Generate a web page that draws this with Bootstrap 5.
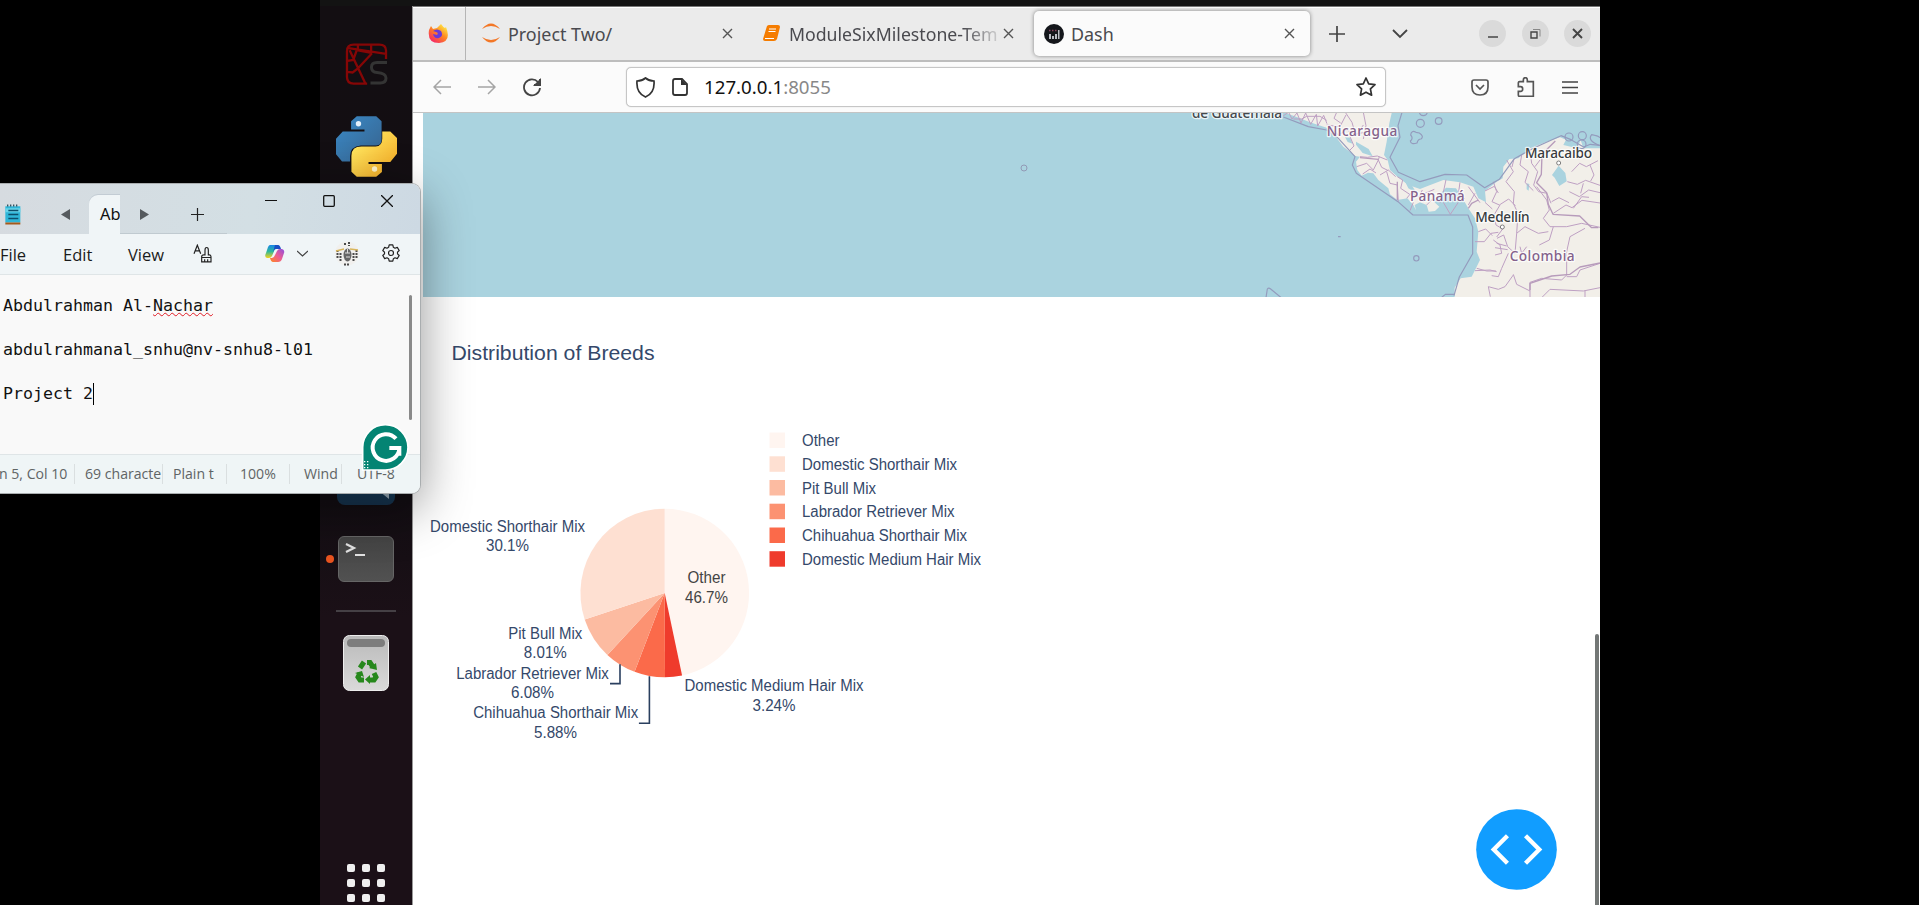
<!DOCTYPE html>
<html lang="en">
<head>
<meta charset="utf-8">
<title>Dash</title>
<link href="https://cdn.jsdelivr.net/npm/bootstrap@5.3.0/dist/css/bootstrap.min.css" rel="stylesheet">
<script src="https://cdn.jsdelivr.net/npm/bootstrap@5.3.0/dist/js/bootstrap.bundle.min.js"></script>
<style>
html,body{height:100%;margin:0;background:#000;overflow:hidden}
body{font-family:"Noto Sans","Open Sans",sans-serif}
svg{display:block;flex:none}
.screen{width:1919px;height:905px;padding-left:320px}
.vm{width:1280px;height:905px}
.topbar{height:6px;background:#131313}
.dock{width:92px;background:linear-gradient(#130e12,#130e13 55%,#1b1017 68%);position:relative;overflow:hidden}
.spy{margin-top:37px}.py{margin-top:30px}
.code-app{margin-top:270px;width:58px;height:58px;border-radius:8px;background:linear-gradient(#17628f,#17344f);overflow:hidden;flex:none}
.term-row{margin-top:31px;width:100%;position:relative}
.run-dot{position:absolute;left:6px;top:19px;width:8px;height:8px;border-radius:50%;background:#e95420}
.term{width:56px;height:46px;border-radius:6px;background:linear-gradient(#444,#515151);border:1px solid #666;color:#eee}
.dock-line{margin-top:28px;width:60px;height:2px;background:#454045;flex:none}
.trash{margin-top:23px}.apps{margin-top:172px}
.browser{background:#fff;border-left:1px solid #999;width:1188px}
.tabstrip{height:54px;background:#ebebeb;border-top:1px solid #777;font-size:17.9px;color:#4a4a4f;box-shadow:inset 0 1px #fff}
.tabstrip .tab-label{padding-top:2px}
.pin{width:53px;height:53px;border-right:1px solid #b5b5b5;padding-right:3px}
.tab-a{width:284px;padding-left:15px;padding-right:17px}
.tab-b{width:284px;padding-left:13px;padding-right:18px}
.fade-title{width:212px;white-space:nowrap;margin-left:9px;font-size:17.7px;-webkit-mask-image:linear-gradient(90deg,#000 82%,rgba(0,0,0,.1));mask-image:linear-gradient(90deg,#000 82%,rgba(0,0,0,.1))}
.tab-on{width:276px;height:45px;background:#fbfbfb;border-radius:5px;box-shadow:0 0 4px rgba(0,0,0,.45);padding-left:10px;padding-right:15px}
.wbtn{width:27px;height:27px;border-radius:50%;background:#dadada}
.toolbar{height:53px;background:#fbfbfb;border-top:2px solid #bdbdbd;border-bottom:1px solid #c4c4c4;padding-left:20px;padding-right:22px}
.urlbar{width:760px;height:40px;border:1px solid #c6c6c6;border-radius:5px;background:#fff;box-shadow:0 0 1px #bbb;font-size:18.7px;color:#111;margin-left:85px;padding:0 9px 0 9px}
.urlbar .port{color:#888}
.page{position:relative}
.map{margin-left:10px}
.scroll-v{position:absolute;right:1px;top:521px;width:4px;height:300px;background:#737776;border-radius:2px}
.debug{position:absolute;left:1063px;top:696px}
.note{position:absolute;left:0;top:183px;width:421px;height:311px;background:#f9f9f9;border:1px solid #a9adaf;border-left:0;border-radius:0 9px 9px 0;box-shadow:0 14px 50px rgba(0,0,0,.42);overflow:hidden}
.ntitle{height:50px;background:linear-gradient(100deg,#d6dbe0,#d3dfe4 60%,#cdd9e3)}
.tabline{border-bottom:1px solid #c0cad0;height:50px}
.nt1{width:25px}.nt2{width:47px;margin-left:17px}.nt4{width:48px}.nt5{width:59px}
.ntab{width:31px;height:39px;background:#f0f5f7;border-radius:9px 0 0 0;overflow:hidden;padding-left:11px;font-size:16.4px;line-height:37px;color:#111;margin-top:11px;box-shadow:0 -1px #c3ccd4}
.wb{width:58px;height:33px}
.nmenu{height:41px;background:#f0f5f7;border-bottom:1px solid #dfe5e7;display:grid;grid-template-columns:63px 65px 65px 72px 32px 38px 47px 1fr;align-items:center;font-family:"Open Sans",sans-serif;font-size:16.5px;color:#1b1b1b;padding-bottom:1px}
.nmenu span{padding-top:3px}
.nmenu svg{margin-top:-1px}
.nedit{height:179px;position:relative;padding:20px 0 0 3px;font:16.61px/22px "DejaVu Sans Mono",monospace;color:#111;white-space:pre}
.nscroll{position:absolute;right:8px;top:20px;width:3px;height:125px;border-radius:2px;background:#8a8a8a}
.squig{text-decoration:underline wavy #e01b24 1px;text-underline-offset:1px;text-decoration-skip-ink:none}
.caret{display:inline-block;width:1px;height:22px;background:#000;vertical-align:-6px}
.nstatus{height:40px;background:#eff5f6;border-top:1px solid #dfe5e7;display:grid;grid-template-columns:75px 88px 64px 63px 52px 78px;align-items:center;font-family:"Open Sans",sans-serif;font-size:14.1px;color:#606465;padding-bottom:1px}
.nstatus div{height:20px;line-height:20px;border-right:1px solid #dadfe0;overflow:hidden;white-space:nowrap;padding-left:10px}
.nstatus div:first-child{padding-left:0;text-indent:-1px}
.nstatus div:last-child{border:0}
.gram{position:absolute;left:361px;top:239px}
</style>
</head>
<body>
<div class="screen position-relative">
<div class="vm d-flex flex-column">
 <div class="topbar flex-shrink-0"></div>
 <div class="d-flex flex-grow-1 overflow-hidden">
  <nav class="dock d-flex flex-column align-items-center">
   <svg class="spy" width="43" height="43" viewBox="104 128 130 130" fill="none" stroke="#860606" stroke-width="7"><path d="M228 176v-25q0-18-20-18h-78q-20 0-20 20v78q0 20 20 20h41M110 143l118 18M118 150l48 101M143 133v17l40 8v-24M185 160l-42 45-16 12-16-2M112 182l17-3 10-28"/><path stroke="#343434" stroke-width="9" d="M231 187h-30q-17 0-17 14 0 15 17 16 27 2 27 17 0 15-17 15h-30"/></svg>
   <svg class="py" width="61" height="61" viewBox="78 349 182 182"><defs><linearGradient id="pb" x1="0" y1="0" x2="1" y2="1"><stop stop-color="#3a8ac8"/><stop offset="1" stop-color="#37628c"/></linearGradient><linearGradient id="pyl" x1="0" y1="0" x2="1" y2="1"><stop offset=".2" stop-color="#ffe55e"/><stop offset="1" stop-color="#f2a31e"/></linearGradient></defs><path fill="url(#pb)" d="M140 350h58l16 15v55q0 17-16 17h-46q-31 2-32 32v16h-24l-18-22v-46l20-22h65v-6h-40v-24z"/><path fill="url(#pyl)" d="M198 530h-58l-16-15v-47q0-28 30-28h42q20-1 20-24v-21h24l20 20v47l-20 24h-65v6h40v24z"/><circle cx="145" cy="372" r="8" fill="#e6f0fa"/><circle cx="193" cy="507" r="8" fill="#fff3c8"/></svg>
   <div class="code-app"><svg width="58" height="58"><path d="M42 44l10 8v-7z" fill="#9fb4c2"/></svg></div>
   <div class="term-row d-flex justify-content-center flex-shrink-0"><span class="run-dot"></span><div class="term"><svg width="54" height="44" viewBox="0 0 54 44" fill="none" stroke="#e2e2e2" stroke-width="2.2"><path d="M7 7l8 4-8 4M16 18h10"/></svg></div></div>
   <div class="dock-line"></div>
   <svg class="trash" width="46" height="57" viewBox="0 0 46 57"><defs><linearGradient id="tg" x1="0" x2="0" y1="0" y2="1"><stop stop-color="#b9b9b9"/><stop offset="1" stop-color="#dadada"/></linearGradient></defs><rect x=".5" y=".5" width="45" height="55" rx="6" fill="url(#tg)" stroke="#eee"/><rect x="4" y="4" width="38" height="8" rx="4" fill="#7d7d7d"/><g fill="none" stroke="#26881c" stroke-width="5"><path d="M17 33l4-6M24 27.500h3l3 4.500"/><path d="M31 38l2 4-2 3h-5"/><path d="M21 45h-4l-2-3 2-4"/></g><path fill="#26881c" d="M26 33l7-5 1 7zM27 40v9l-5-4.500zM12 38l7-2 2 6z"/></svg>
   <svg class="apps" width="38" height="40" fill="#efefef"><rect width="8" height="8" rx="2"/><rect x="15" width="8" height="8" rx="2"/><rect x="30" width="8" height="8" rx="2"/><rect y="15" width="8" height="8" rx="2"/><rect x="15" y="15" width="8" height="8" rx="2"/><rect x="30" y="15" width="8" height="8" rx="2"/><rect y="30" width="8" height="8" rx="2"/><rect x="15" y="30" width="8" height="8" rx="2"/><rect x="30" y="30" width="8" height="8" rx="2"/></svg>
  </nav>
  <main class="browser d-flex flex-column">
   <div class="tabstrip d-flex align-items-center flex-shrink-0">
    <div class="pin d-flex align-items-center justify-content-center"><svg width="20" height="21" viewBox="0 0 20 21"><defs><linearGradient id="fx" x1="1" y1="0" x2=".2" y2="1"><stop offset=".1" stop-color="#fff04a"/><stop offset=".5" stop-color="#ff8a1e"/><stop offset="1" stop-color="#f4216b"/></linearGradient></defs><path fill="url(#fx)" d="M1 7l2-4 2 3 4-1 4-4q2 3 4 4l1-1q6 15-7 16Q-1 20 1 7z"/><path fill="#6a3ad6" d="M5 8q4-3 8 0 3 5-2 7-5 1-6-4l4 1q2-2-1-3z"/></svg></div>
    <div class="tab-a d-flex align-items-center"><svg width="20" height="20" viewBox="0 0 20 20" fill="#f37726"><path d="M1 6Q10-5 19 6 10 0 1 6zM1 14q9 11 18 0-9 6-18 0z"/></svg><span class="tab-label" style="margin-left:7px">Project Two/</span><svg class="ms-auto" width="11" height="11" stroke="#555" stroke-width="1.4"><path d="M1 1l9 9M10 1l-9 9"/></svg></div>
    <div class="tab-b d-flex align-items-center"><svg width="17" height="16" viewBox="0 0 17 16"><path fill="#f57c00" d="M4 1q1-1 2-1h9q2 0 2 2l-3 12q-1 2-3 2H2q-2 0-2-2z"/><path stroke="#fff" stroke-width="1.2" fill="none" d="M6 4h7M5.500 6.500h7M2 13.500h9"/></svg><div class="fade-title tab-label">ModuleSixMilestone-Tem</div><svg style="margin-left:2px" width="11" height="11" stroke="#555" stroke-width="1.4"><path d="M1 1l9 9M10 1l-9 9"/></svg></div>
    <div class="tab-on d-flex align-items-center"><svg width="20" height="20" viewBox="0 0 20 20"><circle cx="10" cy="10" r="10" fill="#15171c"/><g fill="#b9bcc4"><path d="M5 10h2v5H5zM8 12h2v3H8zM11 10h2v5h-2zM14 6h1.500v9H14z"/></g><path stroke="#8a4560" stroke-width="1.500" stroke-dasharray="1.500 1.500" d="M5 6.500h9"/></svg><span class="tab-label" style="margin-left:7px">Dash</span><svg class="ms-auto" width="11" height="11" stroke="#555" stroke-width="1.4"><path d="M1 1l9 9M10 1l-9 9"/></svg></div>
    <svg style="margin-left:19px" width="16" height="16" stroke="#444" stroke-width="1.700"><path d="M0 8h16M8 0v16"/></svg>
    <svg style="margin-left:47px" width="16" height="10" fill="none" stroke="#444" stroke-width="1.800"><path d="M1 1l7 7 7-7"/></svg>
    <div class="d-flex ms-auto" style="gap:15.500px;margin-right:9px"><span class="wbtn d-flex align-items-center justify-content-center"><svg width="10" height="10" stroke="#444" stroke-width="1.500"><path d="M0 8h10"/></svg></span><span class="wbtn d-flex align-items-center justify-content-center"><svg width="11" height="11" fill="none" stroke="#444" stroke-width="1.400"><path d="M1 4h6v6H1z"/><path stroke="#888" stroke-width="1" d="M3 1.500h7v7"/></svg></span><span class="wbtn d-flex align-items-center justify-content-center"><svg width="11" height="11" stroke="#444" stroke-width="1.900"><path d="M1 1l9 9M10 1l-9 9"/></svg></span></div>
   </div>
   <div class="toolbar d-flex align-items-center flex-shrink-0">
    <svg width="18" height="16" fill="none" stroke="#a5a5a5" stroke-width="1.500"><path d="M18 8H1M8 1L1 8l7 7"/></svg>
    <svg style="margin-left:27px" width="18" height="16" fill="none" stroke="#a5a5a5" stroke-width="1.500"><path d="M0 8h17M10 1l7 7-7 7"/></svg>
    <svg style="margin-left:27px" width="18" height="19" fill="none" stroke="#444" stroke-width="1.800"><path d="M17 10A8 8 0 1 1 15 4M17 1v6h-6"/><path fill="#444" stroke="none" d="M18 0v8h-8z"/></svg>
    <div class="urlbar d-flex align-items-center"><svg width="19" height="21" fill="none" stroke="#333" stroke-width="1.700"><path d="M9.500 1Q13 4 18 4q1 12-8.500 16Q0 16 1 4q5 0 8.500-3z"/></svg><svg style="margin-left:17px" width="16" height="18"><path d="M3 1h7l5 5v9q0 2-2 2H3q-2 0-2-2V3q0-2 2-2z" fill="none" stroke="#333" stroke-width="1.800"/><path d="M9 1l6 6H9z" fill="#333"/></svg><span style="margin-left:16px">127.0.0.1<span class="port">:8055</span></span><svg class="ms-auto" width="20" height="20" fill="none" stroke="#333" stroke-width="1.700" stroke-linejoin="round"><path d="M10 1l2.700 5.800 6.300.8-4.600 4.300 1.200 6.300L10 15.200l-5.600 3 1.200-6.300L1 7.600l6.300-.8z"/></svg></div>
    <svg class="ms-auto" width="18" height="17" fill="none" stroke="#555" stroke-width="1.700"><path d="M3 1h12q2 0 2 2v5q0 8-8 8T1 8V3q0-2 2-2zM5 6l4 4 4-4"/></svg>
    <svg style="margin-left:28px" width="18" height="20" viewBox="1012 230 52 60" fill="none" stroke="#555" stroke-width="5"><path d="M1015 251v-4q0-3 4-3h11v-5q0-7 6-7t6 7v5h18v44h-42q-3 0-3-4v-11h7q6 0 6-7t-6-7h-7z"/></svg>
    <svg style="margin-left:27px" width="16" height="13" stroke="#444" stroke-width="1.500"><path d="M0 1h16M0 6.500h16M0 12h16"/></svg>
   </div>
   <div class="page flex-grow-1">
    <svg class="map" width="1177" height="184" viewBox="423 113 1177 184">
     <rect x="423" y="113" width="1177" height="184" fill="#aad3df"/>
     <circle cx="1024" cy="168" r="3" fill="none" stroke="#9299b5"/>
     <g transform="translate(1160 105) scale(.33333)" stroke-linejoin="round">
      <g fill="#f2efe9">
       <path d="M366 20L410 36 450 52 500 68 525 92 550 125 586 153 600 155 588 170 592 195 605 212 624 203 640 205 655 225 685 250 690 268 712 285 742 280 760 300 768 316 764 300 780 292 800 300 806 320 825 318 838 305 822 290 845 262 858 248 888 250 905 275 925 310 945 340 955 380 950 440 960 465 935 515 902 520 884 548 884 580H1320V130L1270 130 1262 105 1252 130 1210 120 1218 104 1200 97 1160 110 1110 130 1075 160 1048 162 1030 185 1028 220 1010 230 975 258 978 292 955 280 940 245 900 232 850 225 805 242 780 252 745 240 712 215 690 195 683 165 672 150 680 110 688 55 696 20z"/></g>
      <g fill="#aad3df"><path d="M588 110l38 22 12 22-30-10-20-25zM555 96l15 2 8 18-15-5zM1196 182l20 22 4 25-22 14-14-25-8-8zM1100 235l8 2-2 20-6-4zM730 220l25 20 15 25-25-15z"/></g>
      <g fill="none" stroke="#bea0c3" stroke-width="3">
       <path d="M370 32l16-10 10 20 15-18 12 30 14-30 15 34 17-30 4 35 18-32 10 25M400 42h25l15-8h40l20 12M500 60l40 5 18-35M510 65l25 25 25-15 30 15 20-30M556 22l20 30 10 35 30-5M610 22l8 40-8 40M530 22l-8 18 20 14M570 95l12 28-14 14M600 155l22 2 30-4 30 12M590 185l30-10 20 20 15-30 3-10M608 207l22-15 18 12M655 165l10 22 20 10M660 210l25-15 22 20M680 200l10 35 22 5 3 50M712 215l16 10-6 25 30 20M740 280l15-18 22 15 10-22M790 290l5-25 28-12M800 300l18-18 24 10M850 262l8-38M900 232l-5 35 20 15M925 245l35 48M945 265l-20 35M850 292l21 36 24-36M760 292l-10 25"/>
       <path d="M975 258l28-14 12 20M1000 230l10 30-14 30 22 10 28-18 20 20M1040 165l20 35-22 30 25 30-3 35M1062 162l-6 24M1085 150l-5 30 25 20-10 32 25 25M1110 135l5 40 18 25-12 40 15 20 25 5 12 30M1180 325l38-25 18 8 30-22 54 8M1130 245l30 40 8 30-18 25 20 25h50l45-10 55 12M1140 165l-15 20M1235 200l24-25 20 10 35-18M1222 230l30 8 25-12 43 15M1228 260l30 15 28-20 34 8M1270 235l-8 30M1290 180l12 30-10 18M1240 310l25-35 22 2M1175 290l22-12 30 15M1070 385l25-20 40 20 30-5M1070 385l-5 60-22-20-12-35-20 10M1060 295l14 30-4 60M1020 300l-18 30 6 30 20 12-18 24M975 292l22 20M955 380l22-8 20 20M945 410h28l20-25 22-3M1000 405l20 15 5 25-20 5M1010 415l30 8M1005 428l38 6M1045 445l-20 45-10 25-20-3M950 490l30 8h28M1010 500l-20-5-45 2M1060 510l-25 35-20 8-30-8M985 545l6 30M1060 508l10 30 40 20M1110 532l35-12 60 5 15-15V440M1275 370l-45 25-10 45M1110 532v46M1220 515h30l10-20 60-20M1180 365l-12 40-30 15M1320 548l-50 10-100-5-25 25M1275 557v20M1080 425l5 20 15-20"/>
      </g>
      <g fill="none" stroke="#b79bbb" stroke-width="4"><path d="M1186 108l-40 40-2 60-14 25 30 30 5 35 14 30 80 5 36 35h20M1110 555v-20l65-22 55-5 30-22 60-12M600 158l55 5M712 230v55M925 310l10-15 20-10"/></g>
      <g fill="none" stroke="#949bbd" stroke-width="3.500"><path d="M370 36l75 29 55 10 35 25 50 55-8 25 12 25 125 85 45 40h165l14 36v80l-40 70-16 56M726 22l-12 40 6 35-30 60 25 45 65 28 75-22 65 2 54 38 44-25 45-62 60-33 80-36 30 12 38 22 20-8 46 5"/><circle cx="790" cy="20" r="12"/><circle cx="781" cy="55" r="12"/><circle cx="836" cy="48" r="10"/><path d="M752 90q2-16 16-8l10 2q15 10 5 18-9 0-12 12-18 6-20-6 10-8 1-18zM844 578l12-10h28M318 578l4-26q4-5 10 0l34 28"/><circle cx="769" cy="460" r="8"/><circle cx="1227" cy="96" r="12"/><circle cx="1267" cy="92" r="12"/><circle cx="1265" cy="118" r="13"/><path d="M1320 122q-40-15-25-33 25 5 25 10M534 395h8"/></g>
      <g fill="#fff" stroke="#666" stroke-width="2.500"><circle cx="1196" cy="174" r="6"/><circle cx="1027" cy="366" r="6"/></g>
      <g font-family="Noto Sans,sans-serif" font-size="41" font-weight="500" stroke="#fff" stroke-width="8" stroke-opacity=".75" paint-order="stroke">
       <text x="96" y="40" textLength="270" fill="#44484c">de Guatemala</text>
       <text x="500" y="93" textLength="212" fill="#84618a">Nicaragua</text>
       <text x="750" y="287" textLength="164" fill="#84618a">Panamá</text>
       <text x="1049" y="467" textLength="195" fill="#84618a">Colombia</text>
       <text x="1095" y="159" textLength="201" fill="#383c3e">Maracaibo</text>
       <text x="946" y="350" textLength="163" fill="#383c3e">Medellín</text>
      </g>
     </g>
    </svg>
    <svg width="1187" height="608" viewBox="413 298 1187 608" font-family="Liberation Sans,Arial,sans-serif" font-size="15.800" fill="#34486a">
     <text x="451.500" y="361" font-size="21" textLength="203" lengthAdjust="spacingAndGlyphs">Distribution of Breeds</text>
     <g transform="translate(0 .3)">
     <path fill="#fff5f0" d="M664.700 593.700V509.400A84.300 84.300 0 0 1 682.100 676.200z"/>
     <path fill="#ef3b2c" d="M664.700 593.700L682.100 676.200A84.300 84.300 0 0 1 665 678z"/>
     <path fill="#fb6a4a" d="M664.700 593.700L665 678A84.300 84.300 0 0 1 634.600 672.500z"/>
     <path fill="#fc9272" d="M664.700 593.700L634.600 672.500A84.300 84.300 0 0 1 607.400 655.600z"/>
     <path fill="#fcbba1" d="M664.700 593.700L607.400 655.600A84.300 84.300 0 0 1 584.700 620.200z"/>
     <path fill="#fee0d2" d="M664.700 593.700L584.700 620.200A84.300 84.300 0 0 1 664.700 509.400z"/>
     <path fill="none" stroke="#2a3f5f" stroke-width="1.600" d="M620 665v19.300h-10M649.400 677v47h-10.500"/>
     </g>
     <g text-anchor="middle">
      <g fill="#444"><text x="706.500" y="584" textLength="38" lengthAdjust="spacingAndGlyphs">Other</text><text x="706.500" y="604.300" textLength="43" lengthAdjust="spacingAndGlyphs">46.7%</text></g>
      <text x="507.500" y="533" textLength="155" lengthAdjust="spacingAndGlyphs">Domestic Shorthair Mix</text><text x="507.500" y="552" textLength="43" lengthAdjust="spacingAndGlyphs">30.1%</text>
      <text x="545.300" y="640.300" textLength="74" lengthAdjust="spacingAndGlyphs">Pit Bull Mix</text><text x="545.300" y="659.300" textLength="43" lengthAdjust="spacingAndGlyphs">8.01%</text>
      <text x="532.500" y="679.500" textLength="152.500" lengthAdjust="spacingAndGlyphs">Labrador Retriever Mix</text><text x="532.500" y="699.300" textLength="43" lengthAdjust="spacingAndGlyphs">6.08%</text>
      <text x="555.700" y="719.300" textLength="165" lengthAdjust="spacingAndGlyphs">Chihuahua Shorthair Mix</text><text x="555.500" y="739" textLength="43" lengthAdjust="spacingAndGlyphs">5.88%</text>
      <text x="774" y="692" textLength="179" lengthAdjust="spacingAndGlyphs">Domestic Medium Hair Mix</text><text x="774" y="712" textLength="43" lengthAdjust="spacingAndGlyphs">3.24%</text>
     </g>
     <g>
      <path fill="#fff5f0" d="M769.500 433.500H785V449h-15.500z"/><text x="802" y="447" textLength="37.500" lengthAdjust="spacingAndGlyphs">Other</text>
      <path fill="#fee0d2" d="M769.500 457.300H785v15.500h-15.500z"/><text x="802" y="471" textLength="155" lengthAdjust="spacingAndGlyphs">Domestic Shorthair Mix</text>
      <path fill="#fcbba1" d="M769.500 481H785v15.500h-15.500z"/><text x="802" y="494.500" textLength="74" lengthAdjust="spacingAndGlyphs">Pit Bull Mix</text>
      <path fill="#fc9272" d="M769.500 504.700H785v15.500h-15.500z"/><text x="802" y="518.300" textLength="152.500" lengthAdjust="spacingAndGlyphs">Labrador Retriever Mix</text>
      <path fill="#fb6a4a" d="M769.500 528.500H785V544h-15.500z"/><text x="802" y="542" textLength="165" lengthAdjust="spacingAndGlyphs">Chihuahua Shorthair Mix</text>
      <path fill="#ef3b2c" d="M769.500 552.200H785v15.500h-15.500z"/><text x="802" y="565.700" textLength="179" lengthAdjust="spacingAndGlyphs">Domestic Medium Hair Mix</text>
     </g>
    </svg>
    <svg class="debug" width="81" height="81" viewBox="108 567 242 242"><circle cx="229" cy="688" r="120.500" fill="#119dff"/><path d="M202 647l-41 41 41 41M256 647l41 41-41 41" fill="none" stroke="#fff" stroke-width="13"/></svg>
    <div class="scroll-v"></div>
   </div>
  </main>
 </div>
</div>
<section class="note">
 <div class="ntitle d-flex align-items-start">
  <div class="d-flex align-items-center" style="height:61px">
   <div class="nt1 d-flex justify-content-center"><svg width="16" height="21" viewBox="14 100 48 62"><path fill="#2fb6d8" d="M15 106h45v49H15z"/><path fill="#68d4ea" d="M15 112h45v12H15z"/><path stroke="#0d4f6b" stroke-width="4" d="M24 119h30M24 131h30M24 143h30"/><path stroke="#31515e" stroke-width="6" stroke-dasharray="4 5" d="M20 104h36"/><path fill="#a55a1c" d="M15 155h45v6H15z"/></svg></div>
   <div class="nt2 d-flex justify-content-center"><svg width="9" height="11" fill="#555a5e"><path d="M9 0v11L0 5.500z"/></svg></div>
  </div>
  <div class="ntab">Ab</div>
  <div class="tabline"><div class="d-flex align-items-center" style="height:61px">
   <div class="nt4 d-flex justify-content-center"><svg width="9" height="11" fill="#555a5e"><path d="M0 0v11l9-5.500z"/></svg></div>
   <div class="nt5 d-flex justify-content-center"><svg width="13" height="13" stroke="#222" stroke-width="1.200"><path d="M0 6.500h13M6.500 0v13"/></svg></div>
  </div></div>
  <div class="d-flex ms-auto pe-1">
   <div class="wb d-flex align-items-center justify-content-center"><svg width="12" height="12" stroke="#111" stroke-width="1.200"><path d="M0 5.500h12"/></svg></div>
   <div class="wb d-flex align-items-center justify-content-center"><svg width="12" height="12" fill="none" stroke="#111" stroke-width="1.300"><rect x=".7" y=".7" width="10.600" height="10.600" rx="1"/></svg></div>
   <div class="wb d-flex align-items-center justify-content-center"><svg width="12" height="12" stroke="#111" stroke-width="1.300"><path d="M0 0l12 12M12 0L0 12"/></svg></div>
  </div>
 </div>
 <div class="nmenu">
  <span>File</span><span>Edit</span><span>View</span>
  <svg width="19" height="19" viewBox="578 226 57 56" fill="none" stroke="#222" stroke-width="3.500"><path d="M581 255l10-26 10 26M585 246h13M604 279v-15q0-6 6-6h4v-14q0-8 5-8t5 8v14h3q5 0 5 6v15zM604 266h28M613 279v-8M622 279v-8"/></svg>
  <svg width="20" height="19" viewBox="0 0 20 19"><defs><linearGradient id="c1" x1="0" y1="0" x2="0" y2="1"><stop stop-color="#1886e8"/><stop offset=".5" stop-color="#2fb89a"/><stop offset="1" stop-color="#f5d31c"/></linearGradient><linearGradient id="c2" x1="1" y1="0" x2="0" y2="1"><stop stop-color="#8f4fe0"/><stop offset=".5" stop-color="#ee5c90"/><stop offset="1" stop-color="#ff8a1c"/></linearGradient></defs><path fill="url(#c1)" d="M5 1h7q2 0 2 2l-4 2-3 7q-1 2-3 2H2q-3-1-1-5l2-6q1-2 2-2z"/><path fill="#194fc4" d="M10 1h3q2 0 3 4h-5q-2 0-3 3z"/><path fill="url(#c2)" d="M15 5h2q3 1 2 4l-2 6q-1 3-4 3H8q-2 0-3-4h2q2 0 3-3l2-4q1-2 3-2z"/></svg>
  <svg width="11" height="7" fill="none" stroke="#444" stroke-width="1.200"><path d="M0 1l5.500 5L11 1"/></svg>
  <svg width="24" height="25" viewBox="0 0 24 25"><circle cx="12" cy="12.500" r="12" fill="#f1f0ee"/><path stroke="#4a4a4a" stroke-width="2" stroke-dasharray="2 1" d="M2.500 9v8M5.500 12v9M18.500 12v9M21.500 9v8M10 2v3M14 1v4M9 23.500h6"/><path stroke="#d9b65c" stroke-width="1.300" fill="none" d="M1 10l8-2M15 8l8 1"/><ellipse cx="12.500" cy="14" rx="4" ry="6.500" fill="#666"/><path stroke="#ddd" d="M10 12h5M11 16h4M12.500 8v4"/></svg>
  <svg width="18" height="18" viewBox="0 0 18 18" fill="none" stroke="#222" stroke-width="1.200" stroke-linejoin="round"><path d="M7.200.8h3.600l.6 2.500 1.600.9 2.300-.8 1.900 3.100L15.500 8.200v1.600l1.700 1.700-1.900 3.100-2.300-.8-1.600.9-.6 2.500H7.200l-.6-2.500-1.600-.9-2.300.8-1.900-3.100 1.700-1.700V8.200L.8 6.500l1.900-3.100 2.300.8 1.600-.9z"/><circle cx="9" cy="9" r="2.500"/></svg>
 </div>
 <div class="nedit"><div>Abdulrahman Al-<span class="squig">Nachar</span></div><div>&nbsp;</div><div>abdulrahmanal_snhu@nv-snhu8-l01</div><div>&nbsp;</div><div>Project 2<span class="caret"></span></div><div class="nscroll"></div></div>
 <div class="nstatus"><div>n 5, Col 10</div><div>69 characte</div><div>Plain t</div><div style="padding-left:13px">100%</div><div style="padding-left:14px">Wind</div><div style="padding-left:15px">UTF-8</div></div>
 <svg class="gram" width="49" height="49" viewBox="1084 250 147 147"><path d="M1157 255a68 68 0 1 1 0 136h-68v-68a68 68 0 0 1 68-68z" fill="#048473" stroke="#fff" stroke-width="5"/><path d="M1189 297a40 40 0 1 0 10 28h-30M1199 323v25" fill="none" stroke="#fff" stroke-width="12"/><path stroke="#fff" stroke-width="4" stroke-dasharray="4 5" d="M1095 364v26M1104 364v26"/></svg>
</section>
</div>
</body>
</html>
